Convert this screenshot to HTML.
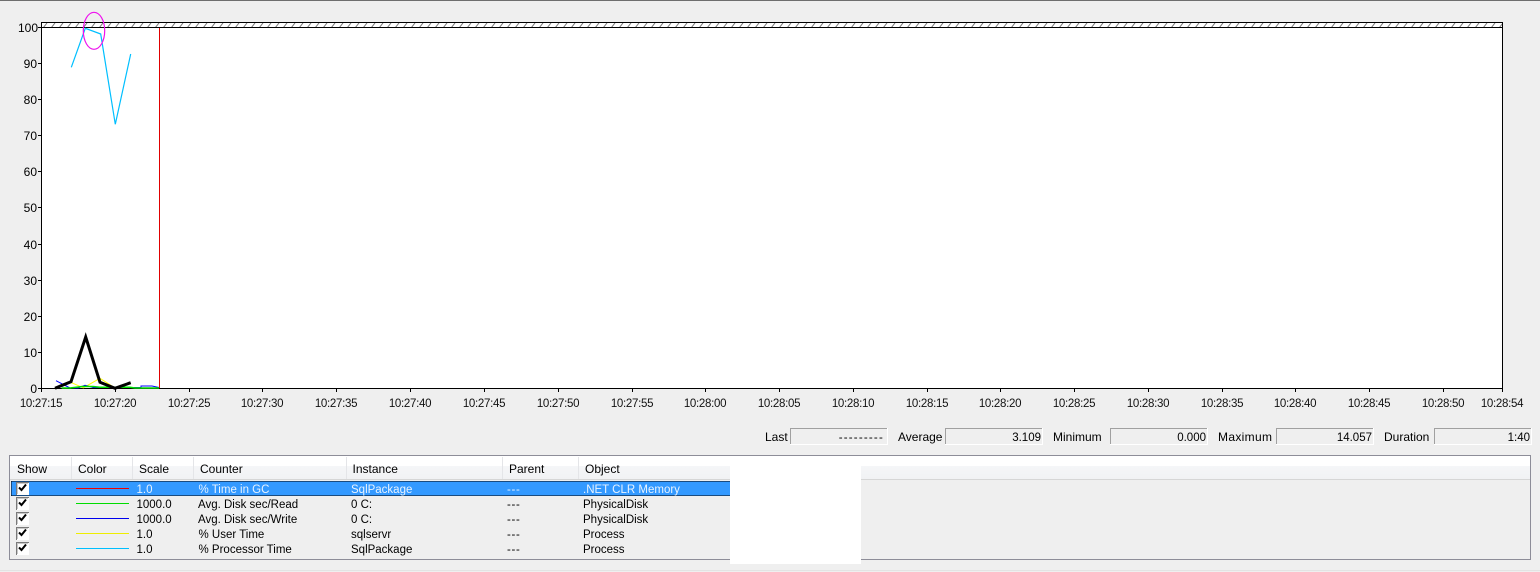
<!DOCTYPE html>
<html><head><meta charset="utf-8"><style>
html,body{margin:0;padding:0;background:#f0f0f0;width:1540px;height:572px;overflow:hidden}
svg{display:block}
text{font-family:"Liberation Sans",sans-serif;font-size:12px;fill:#000}
.r{text-anchor:end}.m{text-anchor:middle}
.x{font-size:11.5px;fill:#111;letter-spacing:-.3px}
.d text{font-size:11.5px}
.v{font-size:11.5px}
.da{letter-spacing:.7px}
</style></head><body>
<svg width="1540" height="572" viewBox="0 0 1540 572" xmlns="http://www.w3.org/2000/svg">
<defs>
<pattern id="h" width="8" height="5" patternUnits="userSpaceOnUse" x="42" y="23">
<rect width="8" height="5" fill="#fff"/>
<path d="M1 5L5 0" stroke="#777" stroke-width="1" fill="none"/>
</pattern>
<linearGradient id="g" x1="0" y1="0" x2="0" y2="1"><stop offset="0" stop-color="#f5f6f8"/><stop offset="1" stop-color="#f1f2f4"/></linearGradient>
</defs>
<rect width="1540" height="572" fill="#efefef"/>
<rect width="1540" height="1" fill="#6e6e6e"/>
<rect y="570" width="1540" height="1" fill="#e3e3e3"/>

<!-- plot -->
<rect x="41" y="22" width="1462" height="367" fill="#fff"/>
<rect x="42" y="23" width="1460" height="4" fill="url(#h)"/>
<path d="M41.5 22.5H1502.5V388.5H41.5ZM41.5 27.5H1502.5" fill="none" stroke="#000"/>
<path d="M159.5 28V388" stroke="#e00000" fill="none"/>
<!-- y ticks -->
<path d="M38 27.5h3M38 63.5h3M38 99.5h3M38 135.5h3M38 171.5h3M38 207.5h3M38 244.5h3M38 280.5h3M38 316.5h3M38 352.5h3M38 388.5h3" stroke="#000" fill="none"/>
<g>
<text class="r" x="38" y="32">100</text><text class="r" x="37" y="68">90</text><text class="r" x="37" y="104">80</text><text class="r" x="37" y="140">70</text><text class="r" x="37" y="176">60</text><text class="r" x="37" y="212">50</text><text class="r" x="37" y="249">40</text><text class="r" x="37" y="285">30</text><text class="r" x="37" y="321">20</text><text class="r" x="37" y="357">10</text><text class="r" x="37" y="393">0</text>
</g>
<!-- x ticks -->
<path d="M41.5 389v3M115.5 389v3M189.5 389v3M262.5 389v3M336.5 389v3M410.5 389v3M484.5 389v3M558.5 389v3M632.5 389v3M705.5 389v3M779.5 389v3M853.5 389v3M927.5 389v3M1000.5 389v3M1074.5 389v3M1148.5 389v3M1222.5 389v3M1295.5 389v3M1369.5 389v3M1443.5 389v3M1502.5 389v3" stroke="#000" fill="none"/>
<g>
<text class="m x" x="41" y="407">10:27:15</text><text class="m x" x="115" y="407">10:27:20</text><text class="m x" x="189" y="407">10:27:25</text><text class="m x" x="262" y="407">10:27:30</text><text class="m x" x="336" y="407">10:27:35</text><text class="m x" x="410" y="407">10:27:40</text><text class="m x" x="484" y="407">10:27:45</text><text class="m x" x="558" y="407">10:27:50</text><text class="m x" x="632" y="407">10:27:55</text><text class="m x" x="705" y="407">10:28:00</text><text class="m x" x="779" y="407">10:28:05</text><text class="m x" x="853" y="407">10:28:10</text><text class="m x" x="927" y="407">10:28:15</text><text class="m x" x="1000" y="407">10:28:20</text><text class="m x" x="1074" y="407">10:28:25</text><text class="m x" x="1148" y="407">10:28:30</text><text class="m x" x="1222" y="407">10:28:35</text><text class="m x" x="1295" y="407">10:28:40</text><text class="m x" x="1369" y="407">10:28:45</text><text class="m x" x="1443" y="407">10:28:50</text><text class="m x" x="1502" y="407">10:28:54</text>
</g>
<!-- series -->
<g fill="none">
<path d="M70.7 382.3L83.3 387.8L100 378.3L115 388" stroke="#ffff00"/>
<path d="M56 380.7L70 388H78L85 385.3L93 387.5H141V386H152L159 387.5" stroke="#0000ff"/>
<path d="M61.7 388H70L82 386.5L93 386.5L100 387.3H130L135 388H159" stroke="#00e000" stroke-width="1.5"/>
<path d="M71.3 67.3L85.3 28.3L100.7 34L115.3 124.3L130.7 54" stroke="#00bfff" stroke-width="1.2"/>
<path d="M55 388.3L71 381.7L85.7 337L100 382.3L115 388.3L130.7 382.7" stroke="#000" stroke-width="3"/>
<ellipse cx="94" cy="30.8" rx="10.7" ry="18.5" stroke="#ee11ee" stroke-width="1.2"/>
</g>

<!-- stats -->
<text x="765" y="441">Last</text>
<text x="898" y="441">Average</text>
<text x="1053" y="441">Minimum</text>
<text x="1218" y="441" textLength="54">Maximum</text>
<text x="1384" y="441">Duration</text>
<g fill="none">
<path d="M790.5 444V428.5H887" stroke="#a0a0a0"/><path d="M790 444.5H887.5V428" stroke="#fff"/>
<path d="M945.5 444V428.5H1042" stroke="#a0a0a0"/><path d="M945 444.5H1042.5V428" stroke="#fff"/>
<path d="M1110.5 444V428.5H1207" stroke="#a0a0a0"/><path d="M1110 444.5H1207.5V428" stroke="#fff"/>
<path d="M1276.5 444V428.5H1373" stroke="#a0a0a0"/><path d="M1276 444.5H1373.5V428" stroke="#fff"/>
<path d="M1434.5 444V428.5H1531" stroke="#a0a0a0"/><path d="M1434 444.5H1531.5V428" stroke="#fff"/>
</g>
<text class="r v" x="884" y="441" style="letter-spacing:1.2px">---------</text>
<text class="r v" x="1041" y="441">3.109</text>
<text class="r v" x="1206" y="441">0.000</text>
<text class="r v" x="1372" y="441">14.057</text>
<text class="r v" x="1530" y="441">1:40</text>

<!-- table -->
<rect x="9.5" y="455.5" width="1521" height="104" fill="#efefef" stroke="#8d8d98"/>
<rect x="10" y="456" width="1520" height="10" fill="#fff"/>
<rect x="10" y="466" width="1520" height="13" fill="url(#g)"/>
<rect x="10" y="479" width="1520" height="1" fill="#d6d6d6"/>
<path d="M71.5 457V479M132.5 457V479M193.5 457V479M346.5 457V479M502.5 457V479M578.5 457V479" stroke="#e4e5e8" fill="none"/>
<text x="17" y="473">Show</text>
<text x="78" y="473">Color</text>
<text x="139" y="473">Scale</text>
<text x="200" y="473">Counter</text>
<text x="352.5" y="473">Instance</text>
<text x="509" y="473">Parent</text>
<text x="585" y="473">Object</text>

<rect x="11" y="481" width="719" height="15" fill="#3399ff"/>
<path d="M11.5 481.5H730M11.5 495.5H730M11.5 481.5V496" stroke="#000" stroke-dasharray="1 1" fill="none"/>

<!-- checkboxes -->
<g>
<g id="c1"><rect x="16" y="482" width="13" height="13" fill="#fff"/><path d="M16.5 495V482.5H29" fill="none" stroke="#7a7a7a" stroke-width="1"/><path d="M17.5 494V483.5H28" fill="none" stroke="#c8c8c8"/><path d="M19 487.5L21.5 490L26 484.5" fill="none" stroke="#000" stroke-width="2"/></g>
<use href="#c1" y="15"/><use href="#c1" y="30"/><use href="#c1" y="45"/><use href="#c1" y="60"/>
</g>
<!-- colour lines -->
<rect x="76" y="488" width="53" height="1" fill="#ee0000"/>
<rect x="76" y="503" width="53" height="1" fill="#00dd00"/>
<rect x="76" y="518" width="53" height="1" fill="#0000ee"/>
<rect x="76" y="533" width="53" height="1" fill="#eeee00"/>
<rect x="76" y="548" width="53" height="1" fill="#00bfff"/>

<g class="d">
<text x="136.5" y="493" style="fill:#e8f3ff">1.0</text>
<text x="198.5" y="493" style="fill:#e8f3ff">% Time in GC</text>
<text x="351" y="493" style="fill:#e8f3ff">SqlPackage</text>
<text x="507" y="493" class="da" style="fill:#e8f3ff">---</text>
<text x="583" y="493" style="fill:#e8f3ff">.NET CLR Memory</text>
<text x="136.5" y="508">1000.0</text><text x="198" y="508">Avg. Disk sec/Read</text><text x="351" y="508">0 C:</text><text x="507" y="508" class="da">---</text><text x="583" y="508">PhysicalDisk</text>
<text x="136.5" y="523">1000.0</text><text x="198" y="523">Avg. Disk sec/Write</text><text x="351" y="523">0 C:</text><text x="507" y="523" class="da">---</text><text x="583" y="523">PhysicalDisk</text>
<text x="136.5" y="538">1.0</text><text x="198.5" y="538">% User Time</text><text x="351" y="538">sqlservr</text><text x="507" y="538" class="da">---</text><text x="583" y="538">Process</text>
<text x="136.5" y="553">1.0</text><text x="198.5" y="553">% Processor Time</text><text x="351" y="553">SqlPackage</text><text x="507" y="553" class="da">---</text><text x="583" y="553">Process</text>
</g>

<!-- white redaction -->
<rect x="730" y="466" width="131" height="98" fill="#fff"/>
</svg>
</body></html>
